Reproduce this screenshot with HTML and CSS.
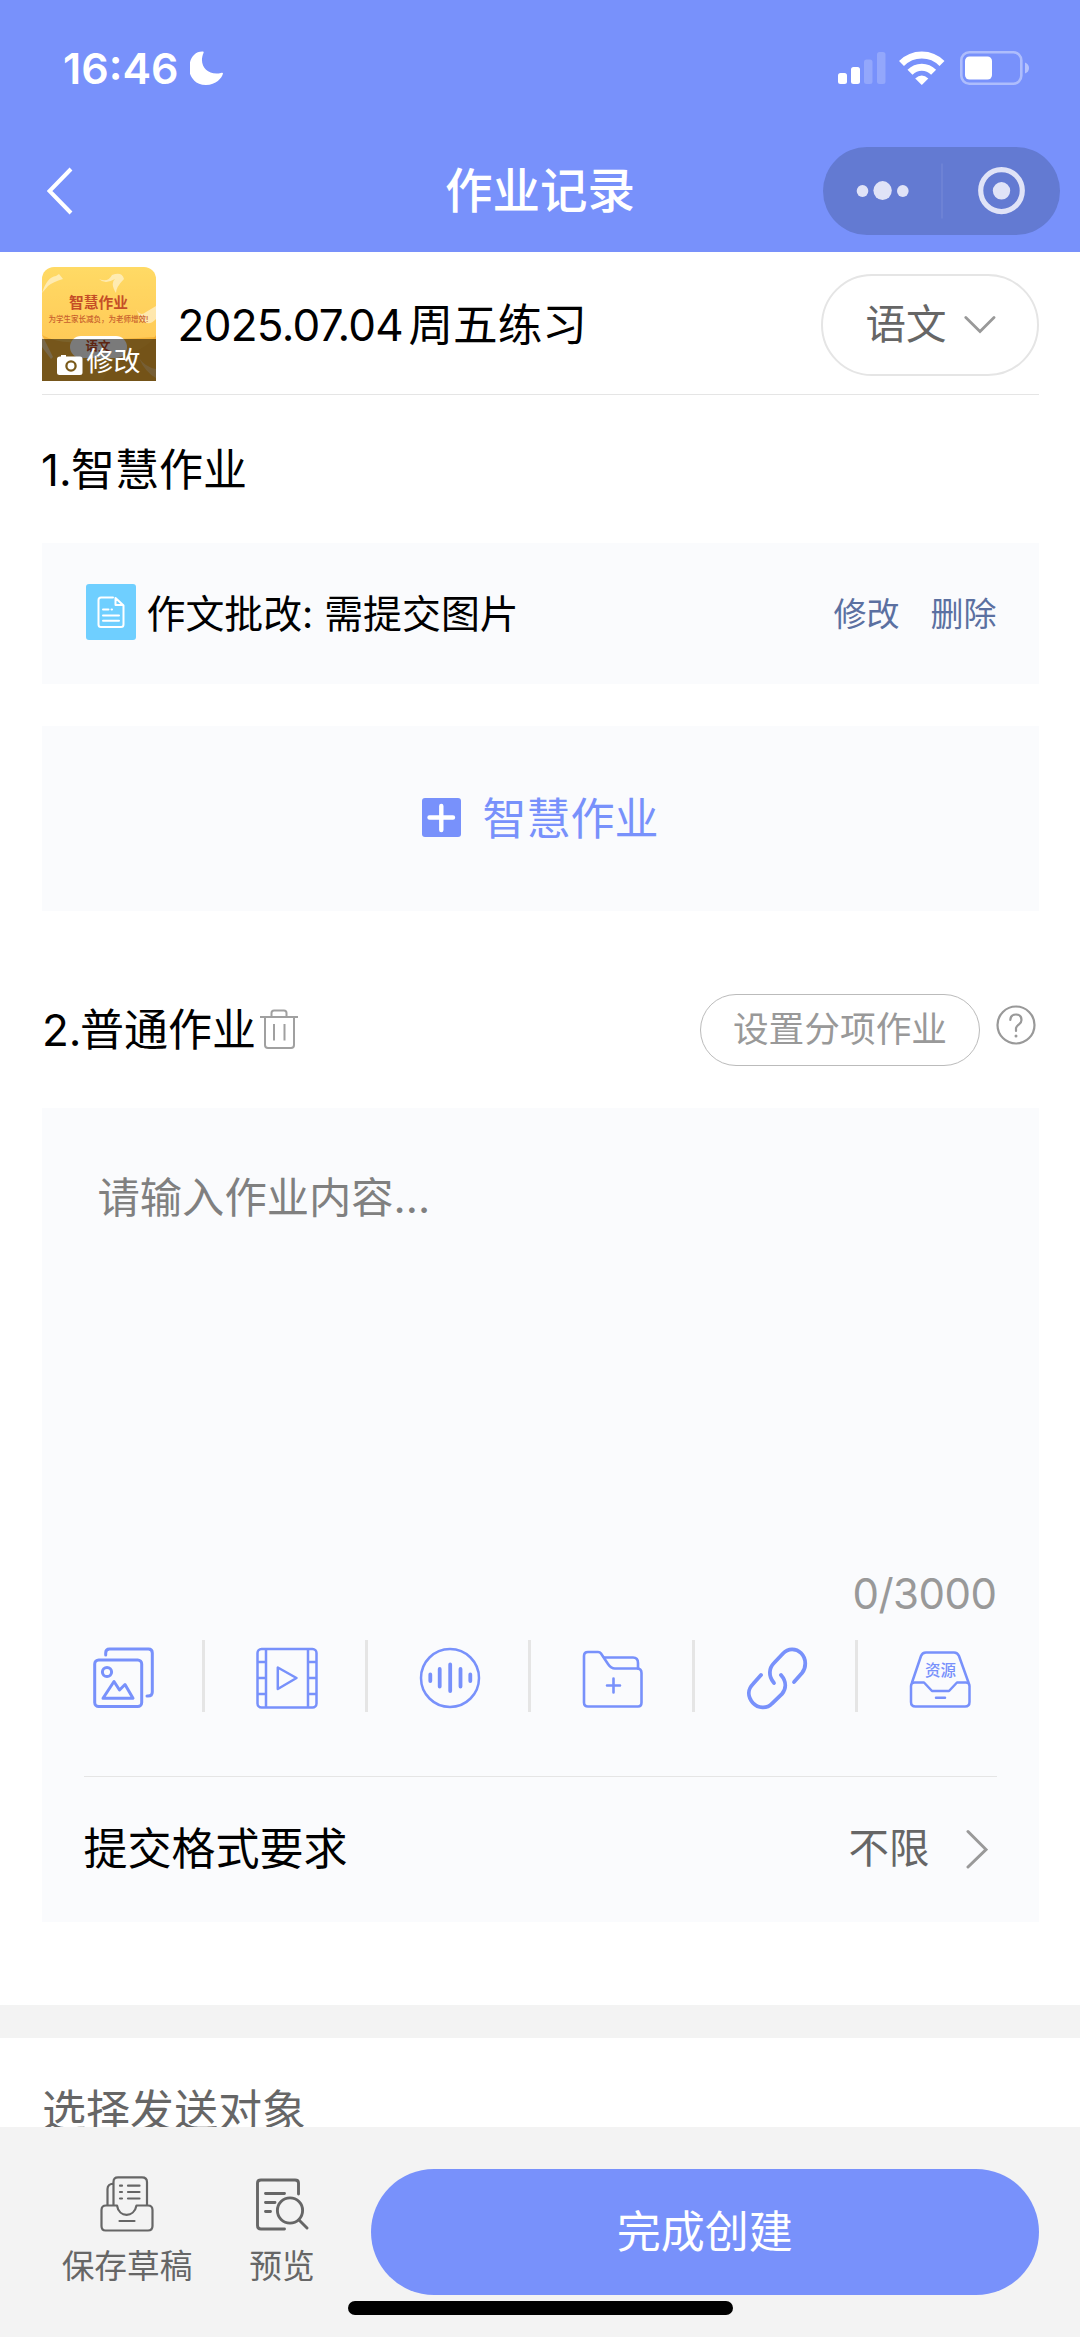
FILE: index.html
```html
<!DOCTYPE html>
<html lang="zh-CN">
<head>
<meta charset="utf-8">
<title>作业记录</title>
<link rel="stylesheet" href="styles.css">
</head>
<body>
<div class="page">
  <header class="header">
    <div class="status">
      <div class="clock">
        <span class="time">16:46</span>
        <svg class="moon" width="34" height="34" viewBox="0 0 34 34"><path d="M13 .5C2-.0-2 12-.5 21-.5 21 2 34 16 34 26 34 32 27 33 22.500 33 21.500 32 21.500 31 22 18 25 8 15 13.500 2 14 1 13.500.5 13 .5Z" fill="#fff"/></svg>
      </div>
      <div class="signals">
        <svg width="48" height="34" viewBox="0 0 48 34" fill="#fff"><rect x="0" y="22" width="9" height="11" rx="2.500"/><rect x="13" y="16" width="9" height="17" rx="2.500"/><rect x="26" y="8.500" width="8.500" height="24.500" rx="2.500" opacity=".2"/><rect x="39" y="1" width="8.500" height="32" rx="2.500" opacity=".2"/></svg>
        <svg width="46" height="34" viewBox="0 0 46 34"><g fill="none" stroke="#fff" stroke-width="7"><path d="M2.500 12.500Q11 4 22.800 4T43 12.500"/><path d="M11 21.300Q16 16.200 22.800 16.200T34.600 21.300"/></g><path d="M16.200 27.500Q22.800 21.500 29.300 27.500L22.800 34Z" fill="#fff"/></svg>
        <svg width="70" height="34" viewBox="0 0 70 34"><rect x="1.300" y="1.300" width="60" height="31.400" rx="8" fill="none" stroke="#fff" stroke-opacity=".4" stroke-width="2.600"/><rect x="5" y="5.500" width="27" height="23" rx="4.500" fill="#fff"/><path d="M65 11.500Q69 13 69 17T65 22.500Z" fill="#fff" fill-opacity=".45"/></svg>
      </div>
    </div>
    <nav class="nav">
      <svg class="back" width="27" height="48" viewBox="0 0 27 48"><path d="M24 2L2.500 24L24 46" fill="none" stroke="#fff" stroke-width="4"/></svg>
      <h1 class="nav-title">作业记录</h1>
      <div class="capsule">
        <svg width="237" height="88" viewBox="0 0 237 88"><g fill="#e0e3f7"><ellipse cx="39.500" cy="44" rx="5.800" ry="6"/><ellipse cx="59.600" cy="43.600" rx="9.200" ry="9.500"/><ellipse cx="79.800" cy="44" rx="5.800" ry="6"/><circle cx="178.500" cy="43.800" r="8.700"/></g><path d="M119 16.500V71.500" stroke="#7086d6" stroke-width="1.500"/><ellipse cx="178.500" cy="43.600" rx="20.800" ry="21" fill="none" stroke="#e0e3f7" stroke-width="5.200"/></svg>
      </div>
    </nav>
  </header>

  <main class="main">
    <section class="title-row">
      <div class="cover">
        <svg class="cover-art" width="114" height="114" viewBox="0 0 114 114"><path d="M0 80V68Q18 78 42 74L114 70V114H0Z" fill="#f7b53a"/><path d="M76 88Q103 85 114 68V114H60Z" fill="#efa931" opacity=".7"/><g fill="#fff" opacity=".5"><path d="M0 26Q5 10 14 9L17 7L21 12Q11 15 6 19Z"/><path d="M57 12Q66 16 70 8Q80 4 82 12Q74 20 74 26Q68 16 73 12Q63 18 57 12Z"/><path d="M94 42Q98 50 104 45L114 39V52Q107 60 99 53Z"/><path d="M0 68L5 78L11 90L9 92L0 80Z"/><path d="M97 91Q103 100 114 102V111Q103 105 97 91Z" opacity=".6"/></g></svg>
        <span class="cover-name">智慧作业</span>
        <span class="cover-sub">为学生家长减负，为老师增效!</span>
        <span class="cover-tag">语文</span>
        <span class="cover-edit"><svg width="26" height="20" viewBox="0 0 26 20"><path d="M3 1.500H4V0H9V1.500H23Q25.500 1.500 25.500 4V17.500Q25.500 20 23 20H2.500Q0 20 0 17.500V4Q0 1.500 3 1.500Z" fill="#fff"/><circle cx="14" cy="11" r="4.600" fill="none" stroke="#7a5a1a" stroke-width="2.300"/></svg>修改</span>
      </div>
      <div class="work-title"><span class="date">2025.07.04</span><span>周五练习</span></div>
      <div class="subject"><span>语文</span><svg width="32" height="18" viewBox="0 0 32 18"><path d="M1.800 1.500L16 15.500L30 1.500" fill="none" stroke="#999" stroke-width="2.800" stroke-linecap="round"/></svg></div>
    </section>

    <h2 class="heading first"><span class="num one">1.</span>智慧作业</h2>

    <section class="task">
      <svg class="task-icon" width="50" height="56" viewBox="0 0 50 56"><rect width="50" height="56" rx="3" fill="#6fcfff"/><g fill="none" stroke="#fff" stroke-width="2" stroke-linecap="round" stroke-linejoin="round"><path d="M27 13.500H15Q12.500 13.500 12.500 16V40.500Q12.500 43 15 43H35Q37.500 43 37.500 40.500V21.500"/><path d="M29.500 14V21H37Z"/><path d="M17 25.500H22.500M25.500 25.500H26M17 31.500H33M17 36.800H33"/></g></svg>
      <span class="task-name">作文批改: 需提交图片</span>
      <span class="link">修改</span>
      <span class="link">删除</span>
    </section>

    <section class="add">
      <svg class="plus" width="39" height="39" viewBox="0 0 39 39"><rect width="39" height="39" rx="3" fill="#7891fb"/><path d="M7.500 19.500H31M19.300 8V32" stroke="#fff" stroke-width="4.400" stroke-linecap="round"/></svg>
      <span>智慧作业</span>
    </section>

    <div class="heading second">
      <h2 class="heading-text"><span class="num two">2.</span>普通作业</h2>
      <svg class="trash" width="39" height="40" viewBox="0 0 39 40"><g fill="none" stroke="#a0a0a0" stroke-width="2"><path d="M0 8H38M11.500 8V4Q11.500 1.500 14 1.500H24Q26.500 1.500 26.500 4V8M5 8V36Q5 39 8 39H31Q34 39 34 36V8M14 15V31.500M24.500 15V31.500"/></g></svg>
      <span class="split">设置分项作业</span>
      <svg class="help" width="40" height="40" viewBox="0 0 40 40"><g fill="none" stroke="#999" stroke-width="2.200" stroke-linecap="round"><circle cx="20" cy="20" r="18.500"/><path d="M14.300 15Q14.500 9.500 20 9.500T25.500 15Q25.500 17.500 23 19.300T20 23V26"/></g><circle cx="20" cy="31" r="1.500" fill="#999"/></svg>
    </div>

    <section class="editor">
      <div class="placeholder">请输入作业内容...</div>
      <div class="counter">0/3000</div>
      <div class="tools">
        <div class="tool"><svg width="64" height="64" viewBox="0 0 64 64"><g fill="none" stroke="#7891fb" stroke-width="3" stroke-linecap="round" stroke-linejoin="round"><rect x="2.700" y="14" width="47" height="46.500" rx="4"/><path d="M13.700 9V7Q13.700 3 17.500 3H56.500Q60.300 3 60.300 7V46Q60.300 50 56 50H55"/><circle cx="15" cy="26" r="4.600"/><path d="M11 52.300L22 35.500L27.500 44L33 38.500L41 52.300Z"/></g></svg></div>
        <div class="tool"><svg width="64" height="64" viewBox="0 0 64 64"><g fill="none" stroke="#7891fb" stroke-width="2.500" stroke-linejoin="round"><rect x="2.500" y="3" width="59" height="58.500" rx="4"/><path d="M11 3V61.500M53 3V61.500M2.500 16H11M2.500 32H11M2.500 48H11M53 16H61.500M53 32H61.500M53 48H61.500M22.800 21.500V43L41.500 32Z"/></g></svg></div>
        <div class="tool"><svg width="64" height="64" viewBox="0 0 64 64"><g fill="none" stroke="#7891fb" stroke-width="2.500" stroke-linecap="round"><circle cx="32" cy="32" r="29"/><path stroke-width="3.800" d="M12.300 28.500V35M21.700 23V40.500M32.200 18.500V45M42.500 23V40.500M52.300 28.500V35"/></g></svg></div>
        <div class="tool"><svg width="64" height="64" viewBox="0 0 64 64"><g fill="none" stroke="#7891fb" stroke-width="2.600" stroke-linecap="round" stroke-linejoin="round"><path d="M7 6H17Q19 6 20 7.500L27 18Q30 22.500 34 22.500H56Q60.500 22.500 60.500 27V56.500Q60.500 60.500 57 60.500H7Q3 60.500 3 56.500V10Q3 6 7 6Z"/><path d="M23 11.500H52Q57 11.500 57 17V22.500M32.500 32.500V46.500M26 39.500H39"/></g></svg></div>
        <div class="tool"><svg width="64" height="64" viewBox="0 0 64 64"><g fill="none" stroke="#7891fb" stroke-width="3.800" stroke-linecap="round"><path d="M29 37C23 30 24 22 29 17L38 7.500C43 2 51 2 56 7C62 13 61 22 57 27L49 36"/><path d="M36 29C42 36 41 43 37 48L27 57.500C22 63 13 62.500 8 57C2 50 3 43 8 38L16 29"/></g></svg></div>
        <div class="tool"><svg width="64" height="64" viewBox="0 0 64 64"><g fill="none" stroke="#7891fb" stroke-width="2.500" stroke-linecap="round" stroke-linejoin="round"><path d="M4 36.500L13 10Q14.300 6.500 18 6.500H46Q49.500 6.500 51 10L60.500 36.500"/><path d="M6.500 36.500H16L24 45H41L49 36.500H58Q61.500 36.500 61.500 40V56Q61.500 60.500 57 60.500H7.500Q3 60.500 3 56V40Q3 36.500 6.500 36.500ZM28 51.800H37"/></g><text x="32.500" y="30" text-anchor="middle" class="tool-text">资源</text></svg></div>
      </div>
      <div class="format">
        <span class="format-name">提交格式要求</span>
        <span class="format-value">不限</span>
        <svg width="22" height="40" viewBox="0 0 22 40"><path d="M2 2.500L20 20.500L2 38" fill="none" stroke="#999" stroke-width="3" stroke-linecap="round"/></svg>
      </div>
    </section>
    <div class="band"></div>
    <div class="target">选择发送对象</div>
  </main>

  <footer class="footer">
    <div class="action save">
      <svg width="54" height="56" viewBox="0 0 54 56"><g fill="none" stroke="#666" stroke-width="2.200" stroke-linecap="round" stroke-linejoin="round"><path d="M13.500 29V6Q13.500 1.300 18 1.300H42Q47 1.300 47 6V29M13.500 7.500Q7.500 8 7.500 13V29"/><path d="M6 29.500H17C19 42 34 42 36.500 29.500H48Q52.500 29.500 52.500 34V50Q52.500 54.500 48 54.500H5.500Q1.500 54.500 1.500 50V34Q1.500 29.500 6 29.500ZM19.500 45H34.500"/><path d="M20 9.700H22M28 9.700H39.500M20 16H22M28 16H39.500M20 22.500H22M28 22.500H39.500"/></g></svg>
      <span>保存草稿</span>
    </div>
    <div class="action preview">
      <svg width="54" height="56" viewBox="0 0 54 56"><g fill="none" stroke="#666" stroke-width="2.900" stroke-linecap="round" stroke-linejoin="round"><path d="M43.500 18V7Q43.500 4 40 4H6Q2.500 4 2.500 7V49.500Q2.500 53 6 53H29.500M10.500 17.500H29.500M10.500 26.500H20M10.500 35.500H15.500"/><circle cx="35" cy="34.500" r="12.600"/><path d="M44 44L52 52"/></g></svg>
      <span>预览</span>
    </div>
    <div class="submit">完成创建</div>
    <div class="home-bar"></div>
  </footer>
</div>
</body>
</html>
```
FILE: styles.css
```css
* { box-sizing: border-box; margin: 0; padding: 0; }
body {
  width: 1080px;
  background: #fff;
  font-family: "Inter", "Noto Sans CJK SC", sans-serif;
  color: #000;
}
svg { display: block; flex: none; }
.page { width: 1080px; height: 2337px; display: flex; flex-direction: column; overflow: hidden; }

/* header */
.header { height: 252px; flex: none; background: #7891fb; color: #fff; }
.status { height: 136px; padding: 0 50px 0 63px; display: flex; justify-content: space-between; align-items: center; }
.clock { display: flex; align-items: center; gap: 12px; }
.time { width: 115px; font-size: 43px; line-height: 50px; font-weight: 600; white-space: nowrap; }
.signals { display: flex; align-items: center; gap: 13px; }
.signals svg:last-child { margin-left: 2px; }
.nav { height: 110px; padding: 0 20px 0 47px; display: grid; grid-template-columns: 300px 1fr 300px; align-items: center; }
.nav-title { margin-right: 28px; padding-left: 1px; text-align: center; font-size: 47.500px; font-weight: 500; line-height: 60px; }
.capsule { justify-self: end; width: 237px; height: 88px; border-radius: 44px; background: #637ad2; }

/* title row */
.main { flex: 1; min-height: 0; overflow: hidden; }
.title-row { height: 143px; margin: 0 41.500px; display: flex; align-items: center; border-bottom: 1.500px solid #e5e5e5; }
.cover { position: relative; width: 114px; height: 114px; margin-top: 2px; overflow: hidden; border-radius: 12px 12px 0 0; background: linear-gradient(#ffda65, #ffca58 65%, #f8b842); }
.cover-name, .cover-sub, .cover-tag, .cover-edit, .cover-art { position: absolute; white-space: nowrap; }
.cover-art { left: 0; top: 0; }
.cover-name { left: 0; right: 0; top: 26px; text-align: center; font-size: 14.700px; line-height: 20px; font-weight: 700; color: #c54e27; }
.cover-sub { left: 7px; top: 47px; font-size: 7.500px; line-height: 12px; font-weight: 500; color: #c8602c; }
.cover-tag { left: 28px; top: 69px; width: 57px; height: 22px; border-radius: 11px; background: #fff; font-size: 12.500px; line-height: 21px; text-align: center; font-weight: 700; color: #c54e27; }
.cover-edit { left: 0; top: 72px; width: 114px; height: 42px; padding: 3px 0 0 15px; display: flex; align-items: center; gap: 4px; background: rgba(0, 0, 0, .52); color: #fff; font-size: 27px; line-height: 36px; }
.cover-edit svg { margin-top: 7px; }
.work-title { margin: 4px 0 0 22px; flex: 1; display: flex; align-items: center; font-size: 44.600px; line-height: 60px; white-space: nowrap; }
.date { width: 231px; font-size: 44px; letter-spacing: -.7px; }
.subject { width: 218px; height: 102px; margin-top: 3px; padding-left: 43px; display: flex; align-items: center; gap: 17px; border: 2.500px solid #e5e5e5; border-radius: 51px; color: #666; font-size: 40.500px; line-height: 60px; }

/* headings */
.heading, .heading-text { font-size: 44px; font-weight: 400; line-height: 60px; }
.first { height: 148px; padding: 45px 0 0 41px; display: flex; }
.one { width: 30px; }
.two { width: 38px; }
.num { flex: none; white-space: nowrap; }
.second { height: 196.500px; padding: 41px 42px 0 42px; display: flex; align-items: center; }
.heading-text { display: flex; white-space: nowrap; }
.trash { margin-left: 4px; margin-top: -2px; }
.split { width: 280px; height: 72px; margin-left: auto; border: 1.500px solid #bbb; border-radius: 36px; font-size: 35.700px; line-height: 69px; text-align: center; color: #999; }
.help { margin: -10px 2px 0 16px; }

/* cards */
.task, .add, .editor { margin: 0 41.500px; background: #fafbfd; }
.task { height: 141px; padding: 0 42px 0 44px; display: flex; align-items: center; }
.task-icon { margin-top: -3px; }
.task-name { flex: 1; margin-left: 11px; font-size: 38.900px; line-height: 56px; white-space: pre; }
.link { margin-left: 31px; font-size: 33px; line-height: 50px; color: #5b70a1; }
.add { height: 185px; margin-top: 42px; display: flex; justify-content: center; align-items: center; gap: 22px; color: #7891fb; font-size: 44px; line-height: 60px; }
.plus { margin-top: -3px; }

/* editor */
.editor { height: 814px; padding: 60px 42px 0; display: flex; flex-direction: column; }
.placeholder { height: 396px; padding-left: 14px; font-size: 42.300px; line-height: 60px; color: #808080; }
.counter { height: 76px; font-size: 42px; line-height: 60px; text-align: right; color: #999; letter-spacing: -.5px; }
.tools { height: 72px; margin: 0 -25px 0 -42px; display: flex; }
.tool { width: 163.300px; flex: none; padding-left: 50px; display: flex; align-items: center; border-right: 3px solid #e5e5e5; }
.tool svg { margin-top: 4px; }
.tool:last-child { border-right: 0; }
.tool-text { font-size: 15.500px; font-weight: 500; fill: #7891fb; }
.format { margin-top: 64px; height: 146px; display: flex; align-items: center; border-top: 1.500px solid #e5e5e5; }
.format-name { flex: 1; font-size: 44px; line-height: 60px; }
.format-value { font-size: 40.500px; line-height: 60px; color: #666; }
.format svg { margin: 0 9px 0 36px; }
.band { height: 33px; margin-top: 83px; background: #f3f3f3; }
.target { padding: 43px 0 0 42px; font-size: 44px; line-height: 60px; color: #666; white-space: nowrap; }

/* footer */
.footer { position: relative; height: 210px; flex: none; display: flex; background: #f3f3f3; }
.action { padding-top: 49px; display: flex; flex-direction: column; align-items: center; gap: 9px; color: #666; font-size: 32.700px; line-height: 50px; white-space: nowrap; }
.save { width: 132px; margin-left: 61px; }
.preview { width: 66px; margin-left: 56px; }
.submit { width: 667.500px; height: 126px; margin: 42px 0 0 56px; border-radius: 63px; background: #7891fb; color: #fff; font-size: 44px; line-height: 127px; text-align: center; }
.home-bar { position: absolute; left: 348px; top: 174px; width: 385px; height: 14px; border-radius: 7px; background: #000; }
```
